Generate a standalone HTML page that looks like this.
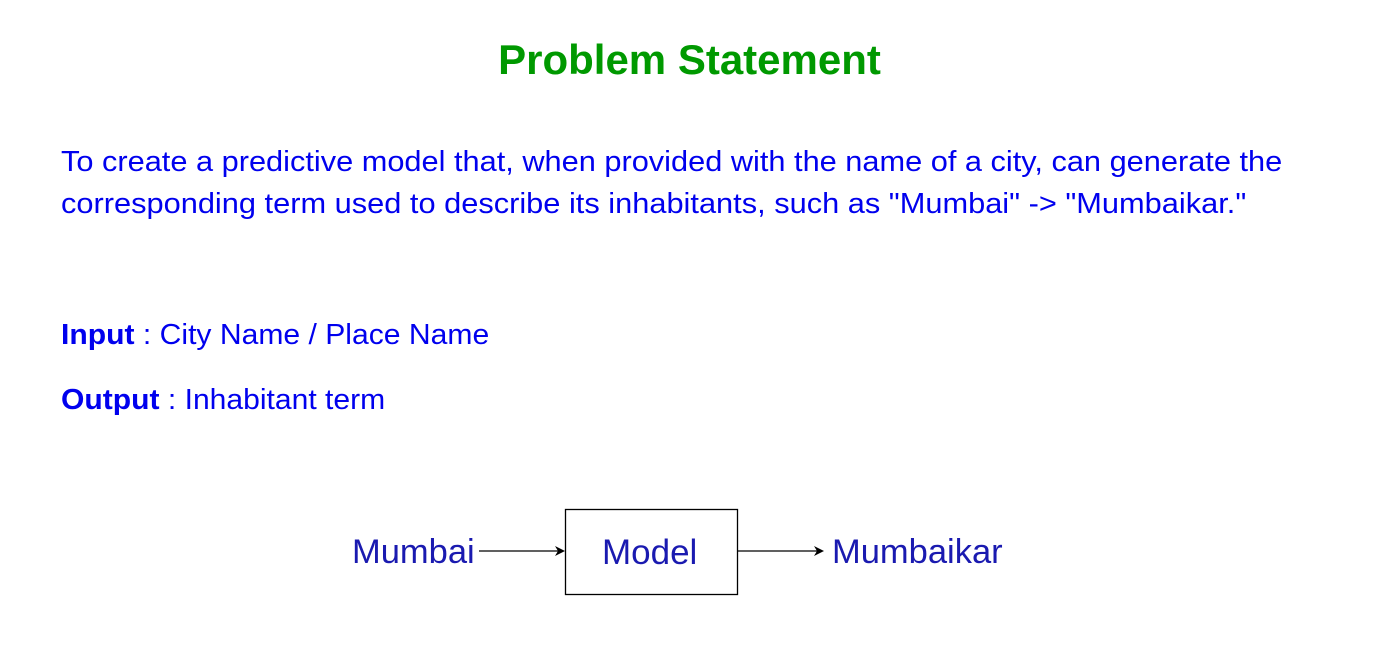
<!DOCTYPE html>
<html><head><meta charset="utf-8"><style>
body{margin:0;width:1379px;height:648px;background:#fff;font-family:"Liberation Sans",sans-serif;position:relative;overflow:hidden}
.t{position:absolute;white-space:nowrap;transform-origin:left center}
h1{position:absolute;top:36px;left:0;width:1379px;text-align:center;margin:0;font-size:42px;color:#009900;font-weight:bold}
.p{color:#0000ee;font-size:29px;left:61px;transform:scaleX(1.05)}
.d{color:#1a1ab0;font-size:34.5px}
</style></head><body>
<h1>Problem Statement</h1>
<div class="t p" style="top:146px;transform:scaleX(1.06)">To create a predictive model that, when provided with the name of a city, can generate the</div>
<div class="t p" style="top:188px;transform:scaleX(1.061)">corresponding term used to describe its inhabitants, such as "Mumbai" -&gt; "Mumbaikar."</div>
<div class="t p" style="top:319px;transform:scaleX(1.038)"><b>Input</b> : City Name / Place Name</div>
<div class="t p" style="top:384px;transform:scaleX(1.037)"><b>Output</b> : Inhabitant term</div>
<div class="t d" style="left:352px;top:533px">Mumbai</div>
<div class="t d" style="left:602px;top:533px;font-size:35px">Model</div>
<div class="t d" style="left:832px;top:533px">Mumbaikar</div>
<svg style="position:absolute;left:0;top:0" width="1379" height="648">
<rect x="565.5" y="509.5" width="172" height="85" fill="none" stroke="#000" stroke-width="1.3"/>
<line x1="479" y1="551" x2="558" y2="551" stroke="#000" stroke-width="1.3"/>
<path d="M565 551 L555 546 L558 551 L555 556Z" fill="#000"/>
<line x1="738" y1="551" x2="817" y2="551" stroke="#000" stroke-width="1.3"/>
<path d="M824 551 L814 546 L817 551 L814 556Z" fill="#000"/>
</svg>
</body></html>
